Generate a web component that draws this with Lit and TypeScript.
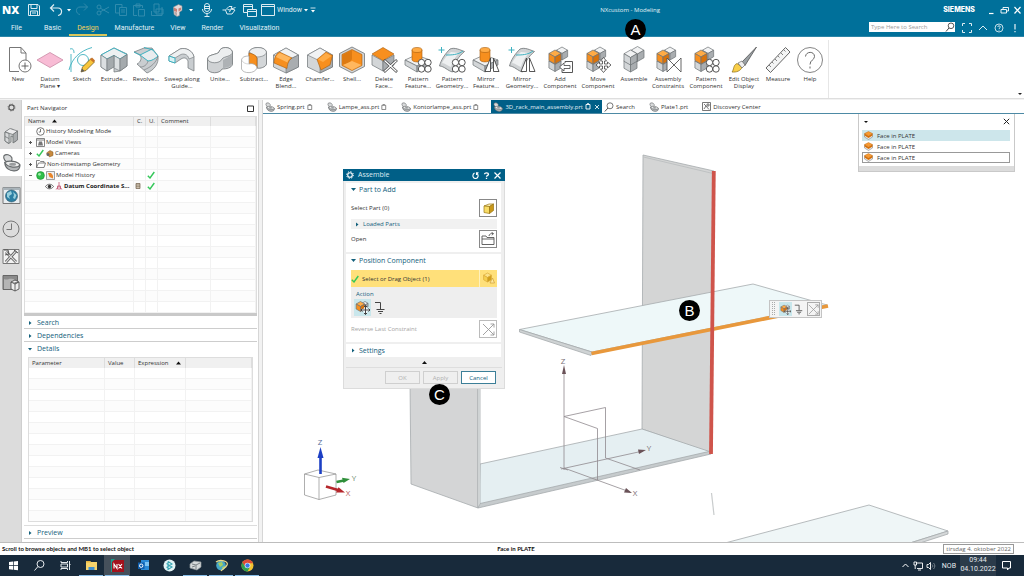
import { LitElement, html, css, svg } from "lit";
import { customElement } from "lit/decorators.js";
import { classMap } from "lit/directives/class-map.js";

type Shade = [string, string, string];
const GREY: Shade = ["#f1f2f3", "#d3d6d8", "#a9adb0"];
const ORANGE: Shade = ["#ffab45", "#f78f1e", "#d9720a"];
const LINE = "#6d7275";

/* Isometric block: cx/cy is the shared front corner, r the edge length. */
const cube = (cx: number, cy: number, r: number, c: Shade, line = LINE) => {
  const w = r * 0.87;
  const h = r / 2;
  return svg`<g stroke=${line} stroke-width=".7" stroke-linejoin="round">
    <path fill=${c[0]} d="M${cx} ${cy}L${cx - w} ${cy - h}L${cx} ${cy - r}L${cx + w} ${cy - h}Z"/>
    <path fill=${c[1]} d="M${cx} ${cy}V${cy + r}L${cx - w} ${cy + h}V${cy - h}Z"/>
    <path fill=${c[2]} d="M${cx} ${cy}V${cy + r}L${cx + w} ${cy + h}V${cy - h}Z"/></g>`;
};
const fourCircles = svg`<g fill="#fff" stroke="#444" stroke-width=".9"><circle cx="17.5" cy="16.5" r="3.2"/><circle cx="24" cy="16.5" r="3.2"/><circle cx="17.5" cy="23" r="3.2"/><circle cx="24" cy="23" r="3.2"/></g>`;
const mirrorMark = svg`<g fill="#fff" stroke="#444" stroke-width=".9" stroke-linejoin="round"><path d="M18.5 12V25.5H13Z"/><path d="M21.5 12V25.5H27Z"/></g>`;
const bossBlock = svg`<g stroke=${LINE} stroke-width=".7" stroke-linejoin="round"><path fill="#f1f2f3" d="M1 14L12 9L26 14L13 20Z"/><path fill="#d3d6d8" d="M1 14V19L13 26V20Z"/><path fill="#a9adb0" d="M13 20V26L26 19V14Z"/></g>
  <path fill="#f78f1e" stroke="#a85c0c" stroke-width=".6" d="M8 4V14C9 16.500 17 16.500 18 14V4Z"/><ellipse cx="13" cy="4" rx="5" ry="2.500" fill="#ffab45" stroke="#a85c0c" stroke-width=".6"/>`;
const surface = svg`<path fill="#cfd2d4" stroke=${LINE} stroke-width=".8" d="M1.500 20C3 14 7 8 12 3C17 1 22 4 26.500 5.500C21 10 16 17 14.500 26C10 25 6 20 1.500 20Z"/><path fill="#eef0f1" d="M4 17C6 13 9 9 13 6L21 7C17 11 14 16 13 21C10 20 7 17 4 17Z"/><path fill="none" stroke="#3eb1c0" stroke-width="1" d="M8 9C13 9 20 9 25 5M.500 4H6.500M3.500 1V7"/>`;
const assembly = svg`${cube(9, 18.5, 7, GREY)}${cube(16, 7.5, 6.5, GREY)}${cube(9, 11, 7, ORANGE)}`;
const prism = svg`<path fill="#d3d6d8" stroke=${LINE} stroke-width=".7" stroke-linejoin="round" d="M1.500 9V21L14 27L26.500 21V9L14 2Z"/><path fill="#f1f2f3" stroke=${LINE} stroke-width=".6" d="M1.500 9L14 2L26.500 9L14 15Z"/><path fill="#a9adb0" stroke=${LINE} stroke-width=".6" d="M14 15L26.500 9V21L14 27Z"/>`;

const ICONS: Record<string, unknown> = {
  new: svg`<path fill="#fff" stroke="#777" stroke-width="1" d="M15 25.500H5.500V1.500H17L22 7V14M17 1.500V7H22"/><circle cx="21" cy="20" r="6" fill="#fff" stroke="#666" stroke-width=".9"/><path stroke="#555" stroke-width=".9" d="M21 16.500V23.500M17.500 20H24.500"/>`,
  datum: svg`<path fill="#f8bcd5" stroke="#c98aa5" stroke-width=".8" d="M1 14L14 6.500L27 14L14 21.500Z"/>`,
  sketch: svg`<g fill="none" stroke="#3eb1c0" stroke-width=".9"><path d="M1 24C4 12 12 5 24 1.500M2 3C5 2 6 4 6 7M3 8V26"/><circle cx="15" cy="14" r="5.500"/></g><path fill="#f8c53b" stroke="#6b5317" stroke-width=".7" d="M13 26L14.500 21L23 12.500L26.500 16L18 24.500Z"/><path fill="#5b5b5b" d="M13 26L14 22.500L16.500 25Z"/><path fill="#c8742a" d="M22 13.500L24 11.500L27 14.500L25.500 16.500Z"/>`,
  extrude: svg`<path fill="#c9cdd0" stroke=${LINE} stroke-width=".7" d="M1 9V21L7 25L14 20V26L20 25L27 20V8L14 2Z"/><path fill="#eef0f1" stroke="#3eb1c0" stroke-width="1" d="M1 9L14 2L27 8.500L20 13L14 9.500L7 13Z"/><path fill="#dcdfe1" stroke=${LINE} stroke-width=".6" d="M1 9L7 13V25L1 21ZM14 9.500L20 13V25L14 22Z"/><path fill="#a5aaad" stroke=${LINE} stroke-width=".6" d="M7 13L14 9.500V21L7 25ZM20 13L27 8.500V20L20 25Z"/>`,
  revolve: svg`<path fill="#c9cdd0" stroke=${LINE} stroke-width=".7" d="M2 6L8 9C10 12 9 16 5 18L15 27C22 24 27 18 26 10L20 2L12 2Z"/><path fill="#e9ecee" stroke="#3eb1c0" stroke-width="1" d="M2 6L8 9L20 3L26 10C24 12 20 15 16 15L8 9M12 1.500L21 4"/><path fill="none" stroke=${LINE} stroke-width=".6" d="M16 15C15 19 12 21 8 21M26 10C24 17 19 21 12 24"/>`,
  sweep: svg`<path fill="#c9cdd0" stroke=${LINE} stroke-width=".7" d="M1 10L12 3C18 1 25 5 26 11V25L20 22V15C19 12 16 11 13 13L7 17L1 15Z"/><path fill="#eef0f1" stroke=${LINE} stroke-width=".6" d="M1 10L12 3C18 1 25 5 26 11L21 13C20 8 15 7 12 9L7 12Z"/><path fill="#d9f1f4" stroke="#3eb1c0" stroke-width="1" d="M1 10L7 12V17L1 15Z"/>`,
  unite: svg`<path fill="#cfd2d4" stroke=${LINE} stroke-width=".8" d="M1.500 13V23C3 28 14 28 16 23C20 23 26 22 26.500 18V6C25 0 14 0 13 6C11 9 2 8 1.500 13Z"/><path fill="#eceeef" stroke=${LINE} stroke-width=".7" d="M1.500 13C2 8 11 9 13 6C14 0 25 0 26.500 6C26 11 18 10 16 13C14 18 3 18 1.500 13Z"/><path fill="#aeb2b5" d="M17 14L26 9V18C25 21 19 22 17 22Z"/>`,
  subtract: svg`<path fill="#d3d6d8" stroke=${LINE} stroke-width=".8" d="M9 6C11 0 25 0 26.500 6V18C26 21 20 23 17 22V12C15 9 10 9 9 10Z"/><path fill="#eceeef" stroke=${LINE} stroke-width=".6" d="M9 6C11 0 25 0 26.500 6C26 10 20 11 17 11Z"/><path fill="#f78f1e" stroke="#a85c0c" stroke-width=".6" d="M9 7C13 8 16 9 17 12V22C15 19 12 18 9 18Z"/><path fill="#fff" stroke="#aaa" stroke-width=".8" d="M1.500 14V23C3 28 15 28 17 22C16 18 12 17 9 18V10C5 10 2 11 1.500 14Z"/><path fill="none" stroke="#bbb" stroke-width=".6" d="M1.500 14C3 17 6 18 9 18"/>`,
  edge: svg`${prism}<path fill="#f78f1e" stroke="#a85c0c" stroke-width=".6" d="M7.500 6L20 12C17 14 15.500 17 15 22.500L2 17C2.500 11 4 8 7.500 6Z"/><path fill="#ffb75e" d="M8 7L19 12C17 13 16 14.500 15.500 16.500L4 11C5 9 6 8 8 7Z"/>`,
  chamfer: svg`${prism}<path fill="#f78f1e" stroke="#a85c0c" stroke-width=".6" d="M11 13.500L20 6L26.500 9.500L24 19L15 24Z"/><path fill="#ffab45" d="M12 13.500L20 7L25.500 10L17 16Z"/>`,
  shell: svg`<path fill="#d3d6d8" stroke=${LINE} stroke-width=".8" d="M1.500 7.500L14 1L26.500 7.500V20.500L14 27L1.500 20.500Z"/><path fill="#f78f1e" stroke="#a85c0c" stroke-width=".6" d="M4 8.500L14 3.500L24 8.500V19.500L14 24.500L4 19.500Z"/><path fill="#dd7a12" d="M4.500 9L14 4V13C13 16 9 18 4.500 19Z"/><path fill="#ffb75e" d="M14 15L23.500 19L14 24L5 19Z"/>`,
  delface: svg`<path fill="#d3d6d8" stroke=${LINE} stroke-width=".7" d="M2 9V19L13 25V15Z"/><path fill="#a9adb0" stroke=${LINE} stroke-width=".7" d="M24 9V19L13 25V15Z"/><path fill="#f78f1e" stroke="#a85c0c" stroke-width=".6" d="M2 8L13 1.500L24 8L13 14.500Z"/><path stroke="#444" stroke-width="2.600" d="M14 14L27 26M27 14L14 26"/><path stroke="#fff" stroke-width="1.300" d="M14.500 14.500L26.500 25.500M26.500 14.500L14.500 25.500"/>`,
  patfeat: svg`${bossBlock}${fourCircles}`,
  patgeo: svg`${surface}${fourCircles}`,
  mirfeat: svg`${bossBlock}${mirrorMark}`,
  mirgeo: svg`${surface}${mirrorMark}`,
  addcomp: svg`${assembly}<path fill="#fff" stroke="#444" stroke-width=".9" d="M19 15.500H26.500V26.500H16V23.500M19 15.500V17"/><path fill="#fff" stroke="#444" stroke-width=".8" d="M13.500 21L18 17V19.500H24V22.500H18V25Z"/>`,
  movecomp: svg`${assembly}<path fill="#fff" stroke="#444" stroke-width=".8" d="M19.500 11.500L22.500 15H20.500V18H23.500V16L27 19L23.500 22V20H20.500V23H22.500L19.500 26.500L16.500 23H18.500V20H15.500V22L12 19L15.500 16V18H18.500V15H16.500Z"/>`,
  assemble: svg`${cube(10.5, 18.5, 7.5, GREY)}${cube(17.5, 8, 7.5, GREY)}${cube(10.5, 11.5, 7.5, GREY)}`,
  constraints: svg`${assembly}<path fill="#fff" stroke="#555" stroke-width=".9" d="M13 12L27 26V12L13 26Z"/>`,
  patcomp: svg`${assembly}${fourCircles}`,
  display: svg`<path fill="#9aa0a4" stroke="#444" stroke-width=".7" d="M26.500 1L12 16L15 19.500Z"/><path fill="#f9cf4a" stroke="#8a6a12" stroke-width=".7" d="M2 26C4 24 3 19 7 17.500L12 21C11 25 6 26.500 2 26Z"/><path fill="#eee" stroke="#555" stroke-width=".6" d="M8 17L12 15L15 19L12 22Z"/>`,
  measure: svg`<path fill="#f4f5f5" stroke="#666" stroke-width="1" d="M2 22L21.500 1.500L26 6L6.500 26.500Z"/><path stroke="#666" stroke-width=".8" d="M5 19L7 21M8 16L9.500 17.500M11 13L13 15M14 10L15.500 11.500M17 7L19 9M20 4L21.500 5.500"/>`,
  help: svg`<circle cx="14" cy="14" r="12.500" fill="#fff" stroke="#777" stroke-width=".9"/><path fill="none" stroke="#666" stroke-width="1" d="M9.500 10.500C10 5 18.500 5 18.500 10.500C18.500 14 14 14 14 18.500M14 20.500V22.500"/>`,
};

const ic = (size: number, body: unknown, box = size) =>
  html`<svg width=${size} height=${size} viewBox="0 0 ${box} ${box}" fill="none" aria-hidden="true">${body}</svg>`;

const tick = ic(8, svg`<path stroke="#34c759" stroke-width="1.400" d="M.8 4.800L3 7L7.300 1"/>`);
const face = ic(9, svg`<path fill="#e6e6e6" stroke="#777" stroke-width=".5" d="M.5 3V6L4.500 8.500L8.500 6V3L4.500 5.500Z"/><path fill="#d9720a" d="M.5 2.500V4.500L4.500 7L8.500 4.500V2.500L4.500 5Z"/><path fill="#f99a30" stroke="#b8620c" stroke-width=".4" d="M.5 2.500L4.500 .5L8.500 2.500L4.500 5Z"/>`);
const part = svg`<path fill="#d9dbdc" stroke="#666a6c" stroke-width=".6" d="M1 1.500C2 .3 4.500 .8 5.200 2.500C5.500 4 4.800 5.200 3.500 5C1.800 4.800 .5 3 1 1.500Z"/><path fill="#b4b7b9" stroke="#666a6c" stroke-width=".6" d="M1.500 5C1.500 8 4 9.500 6.500 9.400C8.500 9.300 9.700 8 9.400 6.300Z"/><path fill="#eceded" stroke="#666a6c" stroke-width=".6" d="M1.500 5C3.500 3.700 8.500 4.300 9.400 6.300C8.500 8 3 8 1.500 5Z"/><ellipse cx="5.600" cy="5.900" rx="1.800" ry=".8" fill="#999c9e"/>`;
const moveSmall = ic(15, svg`${cube(10, 5, 3.5, GREY)}${cube(5.5, 6.5, 5, ORANGE)}<path stroke="#fff" stroke-width="2.400" d="M10.500 6V14M6.500 10H14.500"/><path stroke="#444" stroke-width="1" d="M10.500 5.500V14.500M6 10H15M9 7L10.500 5.500L12 7M9 13L10.500 14.500L12 13M7.500 8.500L6 10L7.500 11.500M13.500 8.500L15 10L13.500 11.500"/>`);
const ground = ic(14, svg`<path stroke="#444" stroke-width="1" d="M1 1.500H6.500V8M2.500 8.500H10.500M4 10.500H9M5.500 12.500H7.500"/>`);
const reverse = ic(13, svg`<path stroke="#999" stroke-width=".9" d="M1 12L12 1M1 1L12 12M8.500 1H12V4.500M8.500 12H12V8.500"/>`);

const TOOLS: [string, string[], string][] = [
  ["new", ["New"], "m"], ["datum", ["Datum", "Plane ▾"], "m"], ["sketch", ["Sketch"], "m"],
  ["extrude", ["Extrude..."], "m"], ["revolve", ["Revolve..."], "m"], ["sweep", ["Sweep along", "Guide..."], "xl"],
  ["unite", ["Unite..."], "l"], ["subtract", ["Subtract..."], "m"], ["edge", ["Edge", "Blend..."], "m"],
  ["chamfer", ["Chamfer..."], "l"], ["shell", ["Shell..."], "s"], ["delface", ["Delete", "Face..."], "l"],
  ["patfeat", ["Pattern", "Feature..."], "m"], ["patgeo", ["Pattern", "Geometry..."], "l"],
  ["mirfeat", ["Mirror", "Feature..."], "m"], ["mirgeo", ["Mirror", "Geometry..."], "xl"],
  ["addcomp", ["Add", "Component"], "l"], ["movecomp", ["Move", "Component"], "xl"],
  ["assemble", ["Assemble"], "m"], ["constraints", ["Assembly", "Constraints"], "l"],
  ["patcomp", ["Pattern", "Component"], "xl"], ["display", ["Edit Object", "Display"], "l"],
  ["measure", ["Measure"], "m"], ["help", ["Help"], "m"],
];

const base = css`
  * { box-sizing: border-box; }
  button, input {
    font: inherit; color: inherit; border: 0; padding: 0; margin: 0;
    background: none; border-radius: 0; line-height: inherit;
  }
  svg { display: block; flex: none; }
`;

@customElement("nx-header")
class NxHeader extends LitElement {
  static styles = [base, css`
    :host { display: block; background: #00709a; color: #e0f0f6; height: 37px; border-bottom: 1px solid #2b86a8; }
    .title { display: flex; align-items: center; height: 20px; padding: 0 2px; }
    .logo { font: 800 11px/16px "Open Sans", sans-serif; color: #fff; width: 25px; }
    .group { display: flex; align-items: center; gap: 4px; margin-right: 7px; }
    .dim { opacity: .22; }
    .win { font-size: 7px; font-family: Roboto, sans-serif; display: flex; align-items: center; gap: 2px; }
    .name { flex: 1; text-align: center; font: 6px/10px "Open Sans", sans-serif; padding-right: 6px; }
    .brand { font: 800 7px/10px Inter, sans-serif; color: #fff; margin-right: 12px; }
    .wc { display: flex; gap: 4px; }
    .row { display: flex; align-items: stretch; height: 16px; padding: 0 3px; }
    .tab { font: 7px/14px Roboto, sans-serif; padding: 1px 8px 0; border-bottom: 2px solid transparent; }
    .tab.file { padding-right: 14px; }
    .tab.on { color: #f4d35e; border-color: #d8c65c; }
    .find { display: flex; align-items: center; background: #fff; height: 10px; width: 86px; margin: 2px 6px 0 auto; color: #555; }
    .find input { flex: 1; min-width: 0; font-size: 6px; line-height: 8px; padding: 0 2px; outline: 0; }
    .find input::placeholder { color: #9a9a9a; opacity: 1; }
    .utils { display: flex; gap: 4px; align-items: center; height: 15px; }
  `];
  render() {
    const b = (label: string, body: unknown, size = 14) =>
      html`<button aria-label=${label}>${ic(size, body)}</button>`;
    const caret = ic(4, svg`<path fill="#fff" d="M0 1H4L2 3.500Z"/>`);
    const w = "#dcecf2";
    return html`
      <div class="title">
        <span class="logo">NX</span>
        <div class="group">
          ${b("Save", svg`<path stroke=${w} d="M1.500 1.500H11L12.500 3V12.500H1.500ZM4 1.500V5.500H10V1.500M3.500 12.500V8H10.500V12.500M5 10H9"/>`)}
          <span></span>
          ${b("Undo", svg`<path stroke=${w} stroke-width="1.200" d="M5 1.500L1.500 5L5 8.500M1.500 5H9C14 5 13.500 12 9 12.500"/>`)}
          ${caret}
          <span class="dim">${b("Redo", svg`<path stroke=${w} d="M9 1.500L12.500 5L9 8.500M12.500 5H5C0 5 .5 12 5 12.500"/>`)}</span>
        </div>
        <div class="group dim">
          ${b("Cut", svg`<path stroke=${w} d="M4 9L13 4M4 5L13 10"/><circle cx="3" cy="4" r="2" stroke=${w}/><circle cx="3" cy="10" r="2" stroke=${w}/>`)}
          ${b("Copy", svg`<path stroke=${w} d="M1.500 1.500H8V4M1.500 1.500V10H5M5.500 4.500H12.500V12.500H5.500ZM7 7H11M7 9H11"/>`)}
          ${b("Paste", svg`<path stroke=${w} d="M5 12.500H1.500V2.500H10.500V5M4 1H8V4H4ZM6.500 6.500H12.500V13H6.500Z"/>`)}
          ${b("Paste special", svg`<path stroke=${w} d="M1.500 8V12.500H12V4M4 1H9V9H4ZM6 6H13V11H6Z"/>`)}
        </div>
        <div class="group">
          ${b("Orient", svg`<path fill="#e6dada" stroke="#8b8f92" stroke-width=".6" d="M2.500 4L7.500 1.500L11 3V7.500L8.500 9V12.500L6 13.500L3 11.500Z"/><path fill="#c97f76" d="M3 4.500L6 6V9L3 8ZM7.500 5.500L10 4.500V7L7.500 8.500Z"/><path fill="#b9a9a9" d="M3.500 8.500L6 9.500V13L3.500 11Z"/>`)}
          ${caret}
        </div>
        <div class="group">
          ${b("Voice", svg`<rect x="4.500" y=".5" width="5" height="8" rx="2.500" stroke=${w}/><path stroke=${w} d="M2.500 6C2.500 12 11.500 12 11.500 6M7 10.500V13.500M4.500 13.500H9.500M5 3.500H9M5 5.500H9"/>`)}
          <span></span>
          ${b("Touch", svg`<path stroke=${w} d="M.5 7H3.500L7 3.500H10L9 6L13.500 4.500M3.500 7L5 11H10L13 7L9 6L7.500 9M5.500 6.500L8 7"/>`)}
        </div>
        <div class="group">
          ${b("Switch window", svg`<path stroke=${w} d="M.5 1.500H9.500V9.500H.5ZM.5 3.500H9.500"/><path fill="#00709a" stroke=${w} d="M4.500 6.500H13.500V13.500H4.500ZM4.500 8.500H13.500"/>`)}
          <button class="win">${ic(14, svg`<path stroke=${w} d="M.5 1.500H13.500V12.500H.5ZM.5 3.500H13.500"/>`)}Window ${caret}
          ${ic(6, svg`<path stroke="#fff" stroke-width=".8" d="M.5 1H5.500"/><path fill="#fff" d="M1 3H5L3 5.500Z"/>`)}</button>
        </div>
        <span class="name">NXcustom - Modeling</span>
        <span class="brand">SIEMENS</span>
        <div class="wc">
          ${b("Minimize", svg`<path stroke="#fff" stroke-width="1.200" d="M2 7.500H6.500"/>`, 9)}
          ${b("Restore", svg`<path stroke="#fff" stroke-width=".9" d="M3 3V1.500H8.500V5H7M1 3.500H6.500V7H1Z"/>`, 9)}
          ${b("Close", svg`<path stroke="#fff" stroke-width="1.200" d="M1.500 1L7.500 7.500M7.500 1L1.500 7.500"/>`, 9)}
        </div>
      </div>
      <div class="row">
        ${["File", "Basic", "Design", "Manufacture", "View", "Render", "Visualization"].map((t) =>
          html`<button class=${classMap({ tab: true, on: t === "Design", file: t === "File" })}>${t}</button>`)}
        <label class="find"><input aria-label="Search commands" placeholder="Type Here to Search">
          ${ic(10, svg`<circle cx="6" cy="3.800" r="2.800" stroke="#444" stroke-width=".9"/><path stroke="#444" d="M4 6L1 9.500"/>`)}</label>
        <div class="utils">
          ${b("Full screen", svg`<path stroke=${w} d="M1.500 4V1.500H4M8 1.500H10.500V4M10.500 8V10.500H8M4 10.500H1.500V8"/>`, 12)}
          ${b("Minimize ribbon", svg`<path stroke=${w} d="M2 8L6 4L10 8"/>`, 12)}
          ${b("Help", svg`<circle cx="6" cy="6" r="4" stroke=${w} stroke-width=".9"/><path stroke=${w} stroke-width=".9" d="M4.800 5C4.800 3.300 7.300 3.300 7.300 5C7.300 6 6 6 6 7M6 7.800V8.600"/>`, 12)}
          ${b("Alerts", svg`<path stroke="#fff" stroke-width="1.100" d="M6 2V7.500M6 9V10.300"/>`, 12)}
        </div>
      </div>`;
  }
}

@customElement("nx-ribbon")
class NxRibbon extends LitElement {
  static styles = [base, css`
    :host { display: flex; background: #fff; height: 62px; border-bottom: 1px solid #dedede; padding: 3px 2px 0; align-items: flex-start; }
    .tools { display: flex; height: 58px; padding: 6px 2px 0 0; border-right: 1px solid #e6e6e6; }
    .tool { display: flex; flex-direction: column; align-items: center; gap: 2px; font-size: 6px; line-height: 7px; color: #333; white-space: nowrap; height: 46px; }
    .tool svg { width: 28px; height: 28px; }
    .s { width: 28px; } .m { width: 32px; } .l { width: 36px; } .xl { width: 40px; }
    .line { display: block; text-align: center; }
    .more { margin-left: auto; align-self: flex-end; padding-bottom: 2px; }
  `];
  render() {
    return html`<div class="tools">${TOOLS.map(([id, lines, size]) => html`
      <button class="tool ${size}">${ic(28, ICONS[id])}<span>${lines.map((l) => html`<span class="line">${l}</span>`)}</span></button>`)}
    </div><button class="more" aria-label="Ribbon options">${ic(4, svg`<path fill="#222" d="M0 1H4L2 3Z"/>`)}</button>`;
  }
}

@customElement("nx-sidebar")
class NxSidebar extends LitElement {
  static styles = [base, css`
    :host { display: flex; flex-direction: column; background: #dcdcdc; width: 22px; flex: none; border-right: 1px solid #cfcfcf; }
    .item { display: flex; align-items: center; justify-content: center; height: 27px; width: 22px; }
    .gear { height: 15px; margin-bottom: 7px; }
    .on { background: #fff; }
    .apart { margin: 6px 0; }
  `];
  render() {
    return html`
      <button class="item gear" aria-label="Resource bar options">${ic(9, svg`<circle cx="4.500" cy="4.500" r="2.600" stroke="#555" stroke-width="1.100"/><circle cx="4.500" cy="4.500" r="3.500" stroke="#666" stroke-width=".8" stroke-dasharray="1.200 1.550"/>`)}</button>
      <button class="item" aria-label="Assembly Navigator">${ic(18, svg`<g fill="#c9cccd" stroke="#666a6c" stroke-width=".7" stroke-linejoin="round"><path d="M3 5V14L6.500 16.500L9 15V9L12 10.500V15L14 14V5L10 2Z"/><path fill="#ececed" d="M3 5L8 1.500L15.500 4L11 7.500Z"/><path fill="#a9acae" d="M11 7.500L15.500 4V13L11 16Z"/><path fill="#d6d8d9" d="M3 5L7 6.500V16.500L3 14ZM3 9.500L7 11.500"/></g>`)}</button>
      <button class="item on" aria-label="Part Navigator">${ic(19, part, 10)}</button>
      <button class="item apart" aria-label="Web">${ic(19, svg`<path fill="#e8edf0" stroke="#777" d="M1 1.500H18V17.500H1Z"/><path fill="#aab4ba" d="M1 1.500H18V4H1Z"/><circle cx="9.500" cy="10" r="6" fill="#2b7fa3" stroke="#356" stroke-width=".6"/><path fill="#9ad0dd" d="M5 7L9 5L10 8L7 10L8 13L5 11ZM11 6L14.500 9L13 13L11 12L12 9Z"/>`)}</button>
      <button class="item" aria-label="History">${ic(18, svg`<circle cx="9" cy="9" r="8" stroke="#777" stroke-width="1"/><path stroke="#777" stroke-width="1" d="M9.500 3.500V9.500H4.500"/>`)}</button>
      <button class="item" aria-label="Process Studio">${ic(18, svg`<path fill="#f3f3f3" stroke="#777" d="M1 2.500H17V16.500H1Z"/><path stroke="#555" stroke-width="2.800" d="M4 15L14 4M4 5L14 15"/><path stroke="#ddd" stroke-width="1.200" d="M4 15L14 4M4 5L14 15"/><path stroke="#555" d="M2 3L6 3L7 7L3 8M12 3L16 6"/>`)}</button>
      <button class="item" aria-label="Roles">${ic(18, svg`<path fill="#8a8a8a" stroke="#666" d="M1 1.500H15.500V15.500H1Z"/><path fill="#b5b5b5" d="M2 15V5C5 7 8 3 13 6V15Z"/><path fill="#eee" stroke="#444" stroke-width=".8" d="M9 8L13 6L17 8V15L13 17L9 15ZM9 8L13 10L17 8M13 10V17"/>`)}</button>`;
  }
}

@customElement("nx-navigator")
class NxNavigator extends LitElement {
  static styles = [base, css`
    :host { display: flex; flex-direction: column; width: 237px; flex: none; background: #fff; padding: 0 1px 3px 2px; border-right: 1px solid #d6d6d6; color: #333; }
    .head { display: flex; justify-content: space-between; align-items: center; height: 16px; padding: 0 3px; }
    .tree { height: 197px; overflow: hidden; border: 1px solid #ddd; border-bottom: 0; flex: none; }
    table { border-collapse: separate; border-spacing: 0; table-layout: fixed; width: 100%; }
    th { background: #f0f0f0; font-weight: 400; text-align: left; height: 9px; border-right: 1px solid #ddd; line-height: 9px; }
    td { height: 11px; border: 1px solid #f2f2f2; border-width: 0 1px 1px 0; line-height: 8px; white-space: nowrap; }
    th, td { padding: 0 0 0 3px; }
    td.mark { padding: 0 0 0 1px; }
    tr:nth-child(even) td { background: #fcfcfc; }
    .cn { width: 109px; } .cs { width: 12px; } .cc { width: 53px; }
    .cell { display: flex; align-items: center; gap: 1px; height: 10px; }
    .pm { width: 7px; }
    .child { padding-left: 16px; font-weight: 700; color: #222; }
    .sort { display: inline-block; margin-left: 6px; }
    .split { height: 3px; background: #c9c9c9; flex: none; }
    .sec { display: flex; align-items: center; gap: 5px; height: 13px; padding: 1px 4px 0; color: #13607c; font-size: 7px; border-bottom: 1px solid #cdcdcd; text-align: left; flex: none; }
    .sec.open { border: 0; }
    .details { flex: 1; margin: 2px 4px 3px; border: 1px solid #ddd; overflow: hidden; min-height: 0; }
    .details th { height: 10px; }
    .wrap { flex: 1; display: flex; min-height: 0; border-bottom: 1px solid #ddd; }
    .dp { width: 76px; } .dv { width: 30px; } .de { width: 51px; }
  `];
  render() {
    const sort = html`<svg class="sort" width="5" height="4" viewBox="0 0 5 4"><path fill="#111" d="M0 3.500H5L2.500 .5Z"/></svg>`;
    const right = ic(4, svg`<path fill="#13607c" d="M1 0V4L3.500 2Z"/>`);
    const down = ic(4, svg`<path fill="#13607c" d="M0 1H4L2 3.500Z"/>`);
    const plus = ic(5, svg`<path stroke="#555" d="M1 2.500H4M2.500 1V4"/>`);
    const minus = ic(5, svg`<path stroke="#666" d="M1 2.500H4"/>`);
    const clock = ic(9, svg`<circle cx="4.500" cy="4.500" r="3.800" stroke="#555" stroke-width=".8"/><path stroke="#555" stroke-width=".8" d="M4.500 2V5H2.800"/>`);
    const views = ic(9, svg`<path stroke="#666" stroke-width=".8" d="M.5 .5H8.500V8.500H.5ZM.5 2H8.500"/><path fill="#777" d="M2 7.500L3 3.500H6L7 7.500Z"/>`);
    const cam = ic(9, svg`<path fill="#c98a3d" stroke="#7a5224" stroke-width=".5" d="M1.500 4L5 1.500L8 3V6.500L4.500 8Z"/><circle cx="3" cy="5.500" r="1.500" fill="#666"/>`);
    const folder = ic(10, svg`<path fill="#fff" stroke="#666" stroke-width=".8" d="M.5 8.500V1.500H3.500L4.500 2.500H8V4M.5 8.500L2.500 4H9.500L8 8.500Z"/>`);
    const ball = ic(9, svg`<circle cx="4.500" cy="4.500" r="3.900" fill="#2fc04a" stroke="#1a8a2f" stroke-width=".6"/><circle cx="3.500" cy="3.300" r="1.400" fill="#a5eab0"/>`);
    const hist = ic(9, svg`<path fill="#eee" stroke="#777" stroke-width=".7" d="M.5 .5H8.500V8.500H.5Z"/><path fill="#e8862a" d="M2 2H5L7 4.500V7.500L3.500 6Z"/>`);
    const eye = ic(9, svg`<path stroke="#444" stroke-width=".8" d="M.5 4.500C2.500 1.500 6.500 1.500 8.500 4.500C6.500 7.500 2.500 7.500 .5 4.500Z"/><circle cx="4.500" cy="4.500" r="1.700" fill="#333"/>`);
    const csys = ic(8, svg`<path stroke="#c2536f" stroke-width=".8" d="M4 0V4.500L.8 7.500M4 4.500L7.200 7.500M2.500 4V7H5.500V4Z"/>`);
    const rows: [unknown, unknown, string, boolean][] = [
      ["", clock, "History Modeling Mode", false],
      [plus, views, "Model Views", false],
      [plus, html`${tick}${cam}`, "Cameras", false],
      [plus, folder, "Non-timestamp Geometry", false],
      [minus, html`${ball}${hist}`, "Model History", true],
    ];
    return html`
      <div class="head"><span>Part Navigator</span>${ic(7, svg`<path stroke="#333" d="M.5 1H6.500V6.500H.5Z"/>`)}</div>
      <div class="tree"><table>
        <colgroup><col class="cn"><col class="cs"><col class="cs"><col class="cc"><col></colgroup>
        <thead><tr><th>Name ${sort}</th><th>C.</th><th>U.</th><th>Comment</th><th></th></tr></thead>
        <tbody>
          ${rows.map(([pm, icon, t, ok]) => html`<tr><td><span class="cell"><span class="pm">${pm}</span>${icon}<span>${t}</span></span></td><td></td><td class="mark">${ok ? tick : ""}</td><td></td><td></td></tr>`)}
          <tr><td><span class="cell child"><span></span>${eye}${csys}<span>Datum Coordinate S...</span></span></td>
            <td class="mark">${ic(6, svg`<path fill="#e7dccb" stroke="#6b5a45" stroke-width=".7" d="M1 .5H5V5.500H1ZM1 2H5M1 3.800H5"/>`)}</td><td class="mark">${tick}</td><td></td><td></td></tr>
          ${Array.from({ length: 12 }, () => html`<tr><td></td><td></td><td></td><td></td><td></td></tr>`)}
        </tbody></table></div>
      <div class="split"></div>
      <button class="sec">${right}Search</button>
      <button class="sec">${right}Dependencies</button>
      <button class="sec open">${down}Details</button>
      <div class="wrap"><div class="details"><table>
        <colgroup><col class="dp"><col class="dv"><col class="de"><col></colgroup>
        <thead><tr><th>Parameter</th><th>Value</th><th>Expression ${sort}</th><th></th></tr></thead>
        <tbody>${Array.from({ length: 16 }, () => html`<tr><td></td><td></td><td></td><td></td></tr>`)}</tbody>
      </table></div></div>
      <button class="sec">${right}Preview</button>`;
  }
}

@customElement("nx-assemble-dialog")
class NxAssembleDialog extends LitElement {
  static styles = [base, css`
    :host { display: block; width: 162px; background: #efefef; border: 1px solid #dcdcdc; border-top: 0; color: #333; }
    .bar { display: flex; align-items: center; height: 12px; background: #005f87; color: #dcebf2; padding: 0 4px 0 3px; gap: 4px; font-size: 7px; margin: 0 -1px; }
    .bar .t { flex: 1; }
    .bar button { color: #fff; }
    .sec { background: #fff; margin: 2px 3px 0 2px; padding: 0 4px 4px 5px; }
    .sec.last { padding-bottom: 0; }
    .h { display: flex; align-items: center; gap: 3px; height: 13px; font-size: 7px; color: #13607c; }
    .row { display: flex; align-items: center; justify-content: space-between; height: 18px; }
    .first { margin-top: 3px; }
    .pick { width: 18px; height: 18px; border: 1px solid #888; background: #fff; display: flex; align-items: center; justify-content: center; }
    .loaded { display: flex; align-items: center; gap: 3px; width: 100%; height: 10px; background: #f1f1f1; color: #13607c; padding: 0 4px; margin: 2px 0 1px; }
    .sel { display: flex; align-items: center; height: 17px; background: #ffe07a; margin-top: 3px; }
    .sel .txt { flex: 1; margin-left: 3px; }
    .sel .pick { border: 0; border-left: 1px solid #fff1bd; background: none; height: 17px; }
    .action { background: #eee; padding: 2px 3px; margin-bottom: 2px; }
    .action .lbl { color: #13607c; line-height: 10px; padding-left: 2px; display: block; }
    .btns { display: flex; gap: 1px; }
    .ab { width: 17px; height: 17px; display: flex; align-items: center; justify-content: center; }
    .ab.on { background: #c9e7ec; }
    .off { color: #a5a5a5; }
    .off .pick { border-color: #bbb; }
    .fold { display: flex; justify-content: center; width: 100%; padding: 3px 0 2px; }
    .foot { display: flex; justify-content: flex-end; gap: 3px; padding: 3px 6px 4px; margin: 0 2px; border-top: 1px solid #dedede; }
    .foot button { width: 35px; height: 13px; border: 1px solid #cfcfcf; font-size: 6px; color: #b0b0b0; }
    .foot .cancel { border-color: #3c7f98; color: #13607c; background: #fff; }
  `];
  render() {
    const down = ic(5, svg`<path fill="#13607c" d="M0 1H5L2.500 4Z"/>`);
    const right = ic(5, svg`<path fill="#13607c" d="M1 .5V4.500L3.500 2.500Z"/>`);
    const yellow: Shade = ["#fbe28a", "#f5cf4e", "#cf9f1c"];
    return html`
      <div class="bar">${ic(8, svg`<circle cx="4" cy="4" r="2.300" stroke="#fff" stroke-width="1.100"/><circle cx="4" cy="4" r="3.400" stroke="#fff" stroke-width="1" stroke-dasharray="1.200 1.470"/>`)}<span class="t">Assemble</span>
        <button aria-label="Reset">${ic(7, svg`<path stroke="#fff" stroke-width="1.100" d="M2.500 1C0 2.500 .5 6.500 3.500 6.500C6.500 6.500 7 2.500 4.500 1M4.500 3V.8H6.500"/>`)}</button>
        <button aria-label="Help">${ic(7, svg`<path stroke="#fff" stroke-width="1.300" d="M1.500 2.300C1.500 .3 5.500 .3 5.500 2.300C5.500 3.500 3.500 3.300 3.500 4.800M3.500 5.700V7"/>`)}</button>
        <button aria-label="Close">${ic(7, svg`<path stroke="#fff" stroke-width="1.200" d="M.5 .5L6.500 6.500M6.500 .5L.5 6.500"/>`)}</button></div>
      <section class="sec">
        <div class="h">${down}Part to Add</div>
        <div class="row first"><span>Select Part (0)</span><button class="pick" aria-label="Select part">${ic(13, svg`<path fill="#fdf0b8" stroke="#9a7716" stroke-width=".7" d="M2 4L7 2H11.500L7.500 4.500Z"/><path fill="#f8dc66" stroke="#9a7716" stroke-width=".7" d="M2 4L7.500 4.500V11.500L2 10.500Z"/><path fill="#c9981a" stroke="#9a7716" stroke-width=".7" d="M7.500 4.500L11.500 2V8.500L7.500 11.500Z"/>`)}</button></div>
        <button class="loaded">${right}Loaded Parts</button>
        <div class="row"><span>Open</span><button class="pick" aria-label="Open">${ic(14, svg`<path stroke="#555" stroke-width=".9" d="M1 12.500V4H5L6 5.500H13V12.500ZM1 7H13M8 4C8 2 10 1.500 12 1.500M10.500 .3L12.500 1.500L11 3.300"/>`)}</button></div>
      </section>
      <section class="sec">
        <div class="h">${down}Position Component</div>
        <div class="sel">${tick}<span class="txt">Select or Drag Object (1)</span><button class="pick" aria-label="Select object">${ic(13, svg`${cube(5.5, 5.5, 4.5, yellow, "#dcab3a")}<path fill="#ffe9a0" stroke="#cf9f3a" stroke-width=".7" d="M8 11L10.500 6L12.500 11Z"/>`)}</button></div>
        <div class="action"><span class="lbl">Action</span><div class="btns"><button class="ab on" aria-label="Move">${moveSmall}</button><button class="ab" aria-label="Ground">${ground}</button></div></div>
        <div class="row off"><span>Reverse Last Constraint</span><button class="pick" disabled aria-label="Reverse last constraint">${reverse}</button></div>
      </section>
      <section class="sec last"><div class="h">${right}Settings</div></section>
      <button class="fold" aria-label="Show less">${ic(5, svg`<path fill="#111" d="M0 4H5L2.500 1Z"/>`)}</button>
      <div class="foot"><button disabled>OK</button><button disabled>Apply</button><button class="cancel">Cancel</button></div>`;
  }
}

@customElement("nx-stage")
class NxStage extends LitElement {
  static styles = [base, css`
    :host { display: flex; flex-direction: column; flex: 1; min-width: 0; background: #fff; color: #333; margin-left: 3px; border-left: 1px solid #d6d6d6; }
    .tabs { display: flex; height: 13px; flex: none; align-items: stretch; }
    .tab { display: flex; align-items: center; gap: 2px; padding: 0 12px 0 2px; white-space: nowrap; }
    .tab.on { background: #005f87; color: #e3f0f5; padding: 0 2px; }
    .view { position: relative; flex: 1; min-height: 0; border-top: 1px solid #4d8aa5; overflow: hidden; }
    .scene { width: 100%; height: 100%; }
    .lbl { font: 8px "Open Sans", sans-serif; fill: #7b7077; text-anchor: middle; }
    .blue { fill: #5a6f9c; } .green { fill: #6f8a70; } .red { fill: #b7605f; }
    .dialog { position: absolute; left: 80px; top: 55px; }
    .results { position: absolute; right: 9px; top: -1px; width: 157px; background: #fff; border: 1px solid #c9c9c9; }
    .rh { display: flex; justify-content: space-between; align-items: center; height: 15px; padding: 0 4px 0 5px; }
    .list { margin: 1px 4px 3px 3px; }
    .list button { display: flex; align-items: center; gap: 4px; width: 100%; height: 11px; padding: 0 1px; border: 1px solid transparent; }
    .list .hot { background: #cde6eb; }
    .list .cur { border-color: #999; }
    .grip { height: 5px; background: #dcdcdc; }
    .mini { position: absolute; left: 506px; top: 186px; display: flex; align-items: center; gap: 1px; width: 53px; height: 18px; background: #f4f4f4; border: 1px solid #c4c4c4; padding: 0 1px; }
    .mini button { width: 13px; height: 14px; display: flex; align-items: center; justify-content: center; }
    .mini .on { background: #c9e7ec; margin-left: auto; }
    .mini .box { border: 1px solid #aaa; }
    .mini button svg { width: 11px; height: 11px; }
  `];
  render() {
    const doc = ic(6, svg`<path stroke="#555" stroke-width=".8" d="M1 1.500H5.500V6.500H1ZM2 .7H4.500"/>`, 7);
    const docW = ic(7, svg`<path stroke="#fff" stroke-width=".9" d="M1 1.500H5V6H1ZM2 .7H4"/>`);
    const p = ic(10, part);
    return html`
      <div class="tabs">
        <button class="tab">${p}Spring.prt ${doc}</button>
        <button class="tab">${p}Lampe_ass.prt ${doc}</button>
        <button class="tab">${p}Kontorlampe_ass.prt ${doc}</button>
        <button class="tab on">${p}3D_rack_main_assembly.prt ${docW}${ic(6, svg`<path stroke="#cfe3ea" stroke-width="1" d="M1 1L5 5M5 1L1 5"/>`)}</button>
        <button class="tab">${ic(10, svg`<circle cx="6" cy="3.800" r="3" stroke="#555" stroke-width=".8"/><path stroke="#555" d="M4 6L.8 9.500"/>`)}Search</button>
        <button class="tab">${p}Plate1.prt</button>
        <button class="tab">${ic(9, svg`<path stroke="#555" stroke-width=".8" d="M.5 .5H8.500V8.500H.5ZM2 7L4 4L2 2M5 2H7V4H5ZM4 4L7 7.500"/>`)}Discovery Center</button>
      </div>
      <div class="view">
        <svg class="scene" viewBox="263 114 761 429" preserveAspectRatio="xMinYMin slice" role="img" aria-label="Rack assembly model">
          <g stroke="#a6abad" stroke-width=".8" stroke-linejoin="round">
            <path fill="#d4d5d5" d="M643 155L714 171L711 453L642 429Z"/>
            <path fill="none" stroke="#b9bdbe" d="M643.500 157L713 173.500"/>
            <path fill="#e5eff2" d="M480 464L642 429L711 452L479 505Z"/>
            <path fill="#c6cbcd" d="M478 504L711 451V454L478 508Z"/>
            <path fill="#d4d5d6" d="M410 380L411 484L478 508V380Z"/>
            <path fill="#eceeee" d="M478 380H480V504L478 508Z"/>
            <path fill="#eef8f9" d="M519.500 329.500L753 284L827 305L592 352Z"/>
            <path fill="#cfd3d4" d="M519.500 329.500V332L591 355.500L592 352Z"/>
            <path fill="#eff6f7" d="M725 543L869 505L948 531L910 543Z"/>
            <path fill="#d5d8d9" d="M948 531V534L920 543H910Z"/>
            <path stroke="#c9cccd" stroke-width="1.200" d="M711.500 493L714 515"/>
          </g>
          <path stroke="#e8983c" stroke-width="3.800" d="M591.500 353.500L828 306"/>
          <path stroke="#cf544b" stroke-width="3.800" d="M713.800 171L711 454"/>
          <path fill="none" stroke="#8f898e" stroke-width=".8" d="M564 372V470M560 467.500L568 470M561 469L643 451M564 468L630 492M564 416.500L605.500 407.500V458L640 470M564 416.500L597.500 428.500V480"/>
          <g fill="#6a5258"><path d="M564 365L566 374H562Z"/><path d="M646 450L638 449.500L639 454Z"/><path d="M632 493L624 492.500L626 488Z"/></g>
          <text class="lbl" x="563" y="364">Z</text><text class="lbl" x="649" y="451">Y</text><text class="lbl" x="635" y="496">X</text>
          <path fill="#fff" stroke="#8d8d8d" stroke-width=".7" d="M304.500 474L318 470L336 474V495L319 499.500L304.500 495ZM304.500 474L319 477.500L336 474M319 477.500V499.500"/>
          <path stroke="#1c3fc4" stroke-width="2.600" d="M320.500 474V456"/><path fill="#1c3fc4" d="M320.500 447L323.500 458H317.500Z"/>
          <path stroke="#2f8f3a" stroke-width="2.400" d="M336.500 482L344 480.500"/><path fill="#2f8f3a" d="M350 479L342 477.800L343.500 483Z"/>
          <path stroke="#b5262b" stroke-width="2.800" d="M326 486.500L338 490"/><path fill="#b5262b" d="M345 492.500L338.500 487.300L336 492.500Z"/>
          <text class="lbl blue" x="320" y="445">Z</text><text class="lbl green" x="354" y="481">Y</text><text class="lbl red" x="348" y="496">X</text>
        </svg>
        <div class="mini"><svg width="5" height="16" viewBox="0 0 5 16" fill="none" aria-hidden="true"><path stroke="#aaa" stroke-dasharray="1 1" d="M1.500 1V15M3.500 1V15"/></svg>
          <button class="on" aria-label="Move">${moveSmall}</button><button aria-label="Ground">${ground}</button><button class="box" aria-label="Reverse">${reverse}</button></div>
        <nx-assemble-dialog class="dialog"></nx-assemble-dialog>
        <div class="results">
          <div class="rh">${ic(4, svg`<path fill="#111" d="M0 1H4L2 3Z"/>`)}<button aria-label="Close">${ic(7, svg`<path stroke="#222" stroke-width="1" d="M.8 .8L6.200 6.200M6.200 .8L.8 6.200"/>`)}</button></div>
          <div class="list">
            <button class="hot">${face}Face in PLATE</button>
            <button>${face}Face in PLATE</button>
            <button class="cur">${face}Face in PLATE</button>
          </div>
          <div class="grip"></div>
        </div>
      </div>`;
  }
}

@customElement("win-taskbar")
class WinTaskbar extends LitElement {
  static styles = [base, css`
    :host { display: flex; height: 21px; background: #182a3b; color: #e6eaee; flex: none; }
    .app { width: 26px; display: flex; align-items: center; justify-content: center; border-bottom: 1px solid transparent; }
    .run { border-image: linear-gradient(90deg, transparent 2px, #8ac0ea 2px 24px, transparent 24px) 1; }
    .active { background: #45505b; }
    .tray { margin-left: auto; display: flex; align-items: center; gap: 3px; }
    .lang { font: 7px/10px Roboto, sans-serif; margin: 0 1px 0 3px; }
    .clock { background: #2b3b4a; width: 36px; height: 21px; text-align: center; font: 7px/9px Roboto, sans-serif; padding-top: 1px; }
    .line { display: block; }
    .bell { margin: 0 12px 0 2px; }
  `];
  render() {
    const a = (label: string, body: unknown, cls = "") =>
      html`<button class="app ${cls}" aria-label=${label}>${ic(13, body)}</button>`;
    return html`
      ${a("Start", svg`<path fill="#fff" d="M2 3L6 2.500V6.300H2ZM6.700 2.400L11 2V6.300H6.700ZM2 7H6V10.700L2 10.200ZM6.700 7H11V11.300L6.700 10.800Z"/>`)}
      ${a("Search", svg`<circle cx="7.500" cy="5" r="3.500" stroke="#e6eaee"/><path stroke="#e6eaee" d="M5 7.500L1.500 11.500"/>`)}
      ${a("Task view", svg`<path stroke="#e6eaee" d="M2 2V3.500H8.500V2M2 11V9.500H8.500V11M2 5H8.500V8H2ZM10.500 2V11M10 5.500H11.500"/>`)}
      ${a("Explorer", svg`<path fill="#f6d36b" d="M1 2H5L6 3H12V11H1Z"/><path fill="#e3b341" d="M1 2H5L6 3.500H1Z"/><path fill="#3f8fd0" d="M3.500 8H9.500V11H3.500Z"/>`, "run")}
      ${a("NX", svg`<path fill="#a3121c" d="M1 1H13V13H1Z"/><path fill="#1e9a8a" d="M0 0H4L1 3V13H0Z"/><path stroke="#fff" stroke-width="1.100" d="M3 9.500V5L6 9.500V5M7.500 5L11 9.500M11 5L7.500 9.500"/>`, "run active")}
      ${a("Outlook", svg`<path fill="#2a8ad6" d="M4 1H12V11H4Z"/><path fill="#7cc3f2" d="M8 3H12V7H8Z"/><path fill="#0f5fae" d="M1 3.500H7.500V10H1Z"/><circle cx="4.200" cy="6.700" r="1.700" stroke="#fff"/>`)}
      ${a("Teamwork", svg`<circle cx="6.500" cy="6.500" r="6" fill="#e3f3f5"/><path stroke="#3aa7b5" stroke-width="1.100" d="M5 2.500V10.500L9 8L3.500 4.500M5 2.500L9 5L3.500 8.500"/>`)}
      ${a("Modeler", svg`<path fill="#d4d8da" stroke="#8b9296" stroke-width=".7" d="M1 5L5 2L12 3V8L8 11L1 9Z"/><path stroke="#7b8286" d="M3 5L7 6L11 4M7 6V10M3 8L6 7"/>`, "run")}
      ${a("Globe", svg`<circle cx="6" cy="6.500" r="4.800" fill="#46a7c8"/><path fill="#a6cf62" d="M3 4L7 3L8 6L5 8ZM7 8L10 7L8 11Z"/><path stroke="#e9d98a" stroke-width="1.300" d="M1 3C5 0 14 2 12 6C11 9 7 10 6 12"/>`, "run")}
      ${a("Chrome", svg`<circle cx="6.500" cy="6.500" r="6" fill="#f2c230"/><path fill="#dd4b39" d="M1.300 3.500A6 6 0 0 1 12 4.200H6.500L4 8Z"/><path fill="#2f9e4f" d="M1.300 3.500A6 6 0 0 0 6.500 12.500L9 8H4.500Z"/><circle cx="6.500" cy="6.500" r="2.800" fill="#fff"/><circle cx="6.500" cy="6.500" r="2.200" fill="#3b78e7"/>`, "run")}
      <div class="tray">
        ${ic(9, svg`<path stroke="#fff" d="M1.500 6L4.500 3L7.500 6"/>`)}
        ${ic(10, svg`<path stroke="#fff" stroke-width=".9" d="M3 2H9.500V7.500H4M1 1V4H3.500V1ZM2.200 4V8M5 9H8"/>`)}
        ${ic(10, svg`<path stroke="#fff" stroke-width=".9" d="M1 3.500H2.500L4.500 1.500V8.500L2.500 6.500H1Z"/><path stroke="#7f8a94" stroke-width=".9" d="M6 3.500C7 4.500 7 5.500 6 6.500M7.500 2C9.300 4 9.300 6 7.500 8"/>`)}
        <span class="lang">NOB</span>
        <div class="clock"><span class="line">09:44</span><span class="line">04.10.2022</span></div>
        <button class="bell" aria-label="Notifications">${ic(11, svg`<path stroke="#fff" d="M1.500 1.500H9.500V8H8L6.500 10V8H1.500Z"/>`)}</button>
      </div>`;
  }
}

@customElement("app-root")
class AppRoot extends LitElement {
  static styles = [base, css`
    :host { display: flex; flex-direction: column; height: 100vh; position: relative; overflow: hidden; background: #f2f2f2; font: 6px/8px "Open Sans", "Noto Sans", sans-serif; }
    nx-header, nx-ribbon { flex: none; }
    .main { display: flex; flex: 1; min-height: 0; padding-top: 1px; border-bottom: 1px solid #bdbdbd; }
    .status { display: grid; grid-template-columns: 1fr auto 1fr; align-items: center; height: 12px; background: #fff; color: #111; font: 700 6px/8px Lato, sans-serif; padding-left: 2px; flex: none; }
    .mid { padding-left: 6px; }
    .tip { position: absolute; right: 10px; bottom: 22px; height: 10px; padding: 0 2px; background: #fff; border: 1px solid #999; color: #666; font: 6px/8px "Open Sans", sans-serif; }
    .badge { position: absolute; width: 21px; height: 21px; border-radius: 50%; background: #000; color: #fff; font: 15px/21px "Liberation Sans", sans-serif; text-align: center; }
    .a { left: 625px; top: 19px; } .b { left: 679px; top: 300px; } .c { left: 429px; top: 384px; }
  `];
  render() {
    return html`
      <nx-header></nx-header>
      <nx-ribbon></nx-ribbon>
      <div class="main"><nx-sidebar></nx-sidebar><nx-navigator></nx-navigator><nx-stage></nx-stage></div>
      <div class="status"><span>Scroll to browse objects and MB1 to select object</span><span class="mid">Face in PLATE</span></div>
      <win-taskbar></win-taskbar>
      <span class="tip">tirsdag 4. oktober 2022</span>
      <span class="badge a">A</span><span class="badge b">B</span><span class="badge c">C</span>`;
  }
}
